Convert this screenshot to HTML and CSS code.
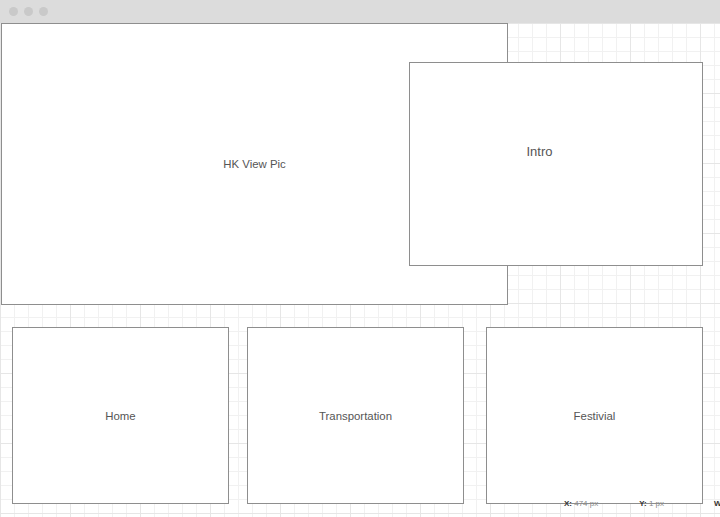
FILE: index.html
```html
<!DOCTYPE html>
<html>
<head>
<meta charset="utf-8">
<link rel="stylesheet" href="styles.css">
</head>
<body>
<div class="window">
  <div class="titlebar">
    <span class="dot"></span><span class="dot"></span><span class="dot"></span>
  </div>
  <div class="canvas">
    <div class="top">
      <div class="box hero"><span class="label">HK View Pic</span></div>
      <div class="box intro"><span class="label big">Intro</span></div>
    </div>
    <div class="row">
      <div class="box card"><span class="label">Home</span></div>
      <div class="box card card-2"><span class="label">Transportation</span></div>
      <div class="box card card-3"><span class="label">Festivial</span></div>
    </div>
    <div class="status">
      <span class="item x"><b>X:</b> 474 px</span>
      <span class="item y"><b>Y:</b> 1 px</span>
      <span class="item w"><b>W</b></span>
    </div>
  </div>
</div>
</body>
</html>
```

FILE: styles.css
```css
* { box-sizing: border-box; }
html, body { margin: 0; padding: 0; }
body {
  width: 720px;
  height: 517px;
  overflow: hidden;
  background: #ffffff;
  font-family: "Liberation Sans", Arial, sans-serif;
}
.window { width: 720px; height: 517px; display: flex; flex-direction: column; }
.titlebar {
  height: 23px;
  background: #dcdcdc;
  display: flex;
  align-items: center;
  gap: 6px;
  padding-left: 9px;
  padding-bottom: 1px;
}
.dot {
  width: 9px;
  height: 9px;
  border-radius: 50%;
  background: #c9c9c9;
}
.canvas {
  position: relative;
  flex: 1;
  background-color: #ffffff;
  background-image:
    linear-gradient(to right, #e6e6e6 1px, transparent 1px),
    linear-gradient(to bottom, #e6e6e6 1px, transparent 1px),
    linear-gradient(to right, #f1f1f1 1px, transparent 1px),
    linear-gradient(to bottom, #f1f1f1 1px, transparent 1px);
  background-size: 70px 70px, 70px 70px, 14px 14px, 14px 14px;
  background-position: 0px 0px, 0px 0px, 0px 0px, 0px 0px;
}
.top { position: relative; }
.box {
  background: #ffffff;
  border: 1px solid #8e8e8e;
  display: flex;
  align-items: center;
  justify-content: center;
}
.label { color: #555555; font-size: 11.4px; }
.label.big { font-size: 13px; }
.hero {
  margin-left: 1px;
  width: 507px;
  height: 282px;
}
.intro {
  position: absolute;
  left: 409px;
  top: 39px;
  width: 294px;
  height: 204px;
  padding-right: 33px;
  padding-bottom: 25px;
}
.row {
  display: flex;
  margin-top: 22px;
  padding-left: 12px;
}
.card { width: 217px; height: 177px; }
.card-2 { margin-left: 18px; }
.card-3 { margin-left: 22px; }
.status {
  position: absolute;
  left: 564px;
  top: 476px;
  font-size: 8px;
  color: #8a8a8a;
  display: flex;
  white-space: nowrap;
}
.status b { color: #333333; font-weight: bold; }
.item.y { margin-left: 41px; }
.item.w { margin-left: 50px; }
```
